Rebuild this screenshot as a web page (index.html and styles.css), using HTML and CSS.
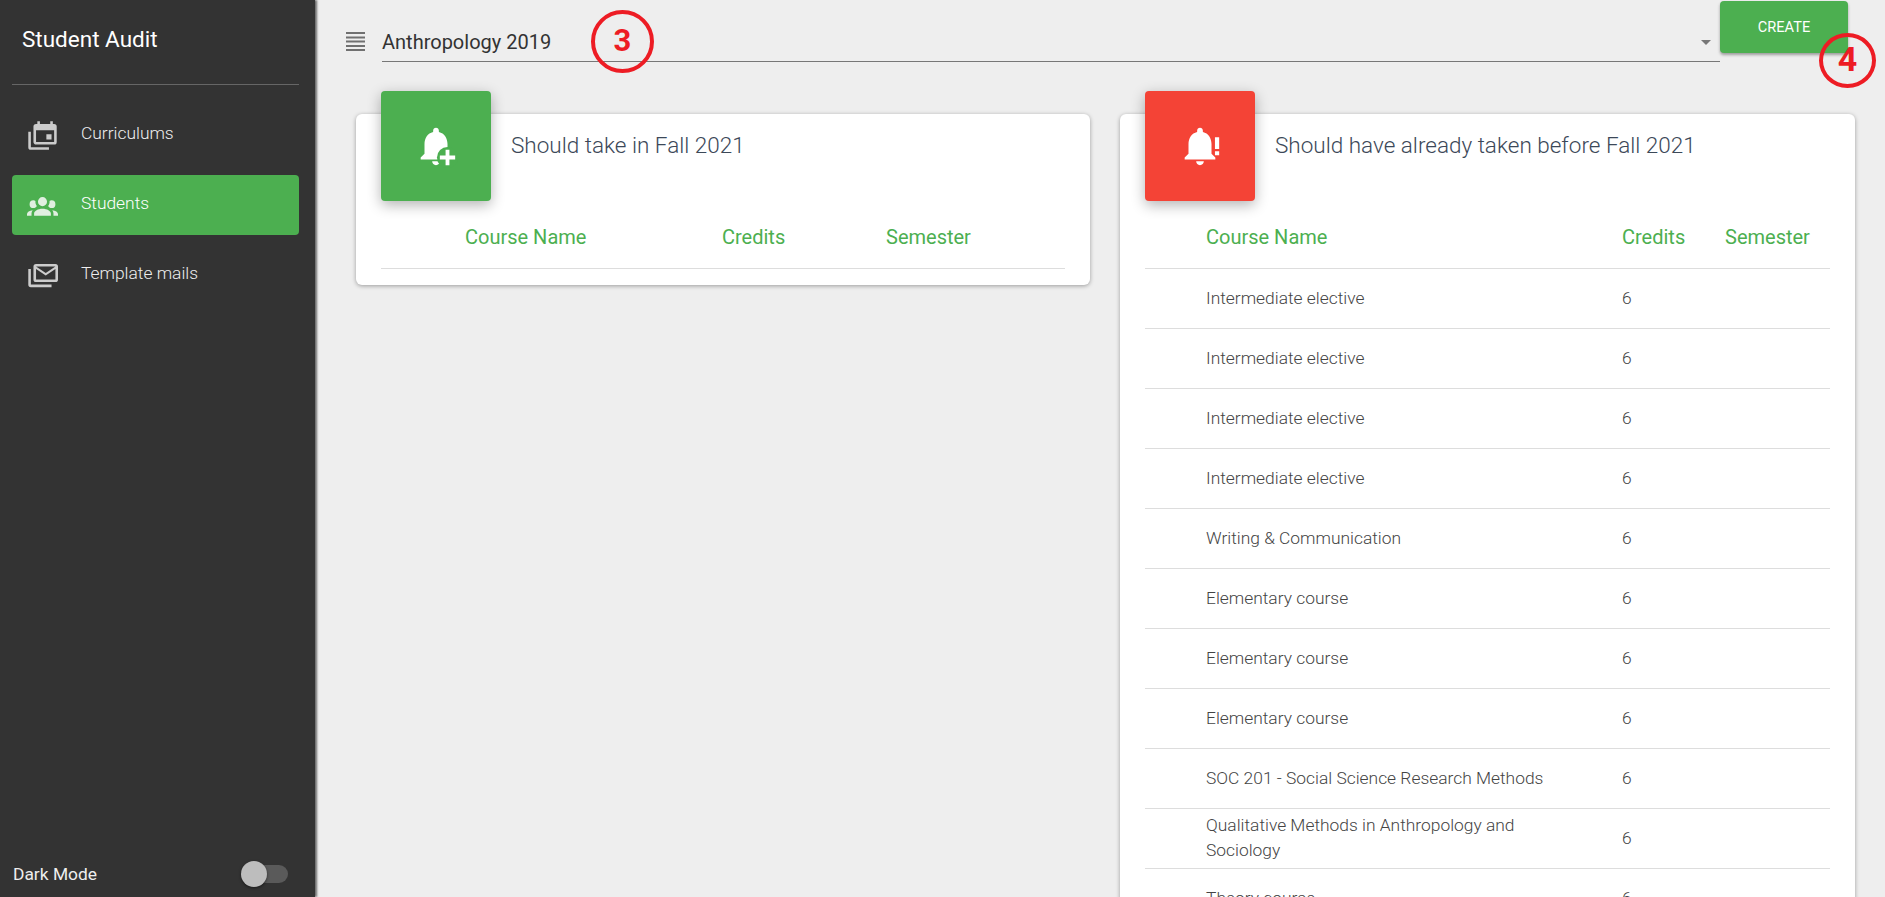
FILE: index.html
```html
<!DOCTYPE html>
<html lang="en">

<head>
	<meta charset="UTF-8" />
	<title>Student Audit</title>
	<link rel="stylesheet" href="styles.css">
</head>

<body>
	<!-- sidebar -->
	<div class="sidebar">
		<div class="brand">Student Audit</div>
		<div class="nav">
			<a class="nav-item">
				<svg class="nav-icon" viewBox="0 0 24 24"><path d="M21,17V8H7V17H21M21,3A2,2 0 0,1 23,5V17A2,2 0 0,1 21,19H7C5.89,19 5,18.1 5,17V5A2,2 0 0,1 7,3H8V1H10V3H18V1H20V3H21M3,21H17V23H3A2,2 0 0,1 1,21V9H3V21M19,15H15V11H19V15Z" /></svg>
				<span>Curriculums</span>
			</a>
			<a class="nav-item active">
				<svg class="nav-icon" viewBox="0 0 24 24"><path d="M12,5.5A3.5,3.5 0 0,1 15.5,9A3.5,3.5 0 0,1 12,12.5A3.5,3.5 0 0,1 8.5,9A3.5,3.5 0 0,1 12,5.5M5,8C5.56,8 6.08,8.15 6.53,8.42C6.38,9.85 6.8,11.27 7.66,12.38C7.16,13.34 6.16,14 5,14A3,3 0 0,1 2,11A3,3 0 0,1 5,8M19,8A3,3 0 0,1 22,11A3,3 0 0,1 19,14C17.84,14 16.84,13.34 16.34,12.38C17.2,11.27 17.62,9.85 17.47,8.42C17.92,8.15 18.44,8 19,8M5.5,18.25C5.5,16.18 8.41,14.5 12,14.5C15.59,14.5 18.5,16.18 18.5,18.25V20H5.5V18.25M0,20V18.5C0,17.11 1.89,15.94 4.45,15.6C3.86,16.28 3.5,17.22 3.5,18.25V20H0M24,20H20.5V18.25C20.5,17.22 20.14,16.28 19.55,15.6C22.11,15.94 24,17.11 24,18.5V20Z" /></svg>
				<span>Students</span>
			</a>
			<a class="nav-item">
				<svg class="nav-icon" viewBox="0 0 24 24"><path d="M22,3H7A2,2 0 0,0 5,5V15A2,2 0 0,0 7,17H22A2,2 0 0,0 24,15V5A2,2 0 0,0 22,3M22,15H7V7L14.5,12L22,7V15M14.5,10L7,5H22L14.5,10M3,19H19V21H3A2,2 0 0,1 1,19V7H3V19Z" /></svg>
				<span>Template mails</span>
			</a>
		</div>
		<div class="dark-mode">
			<span>Dark Mode</span>
			<div class="switch"><div class="switch-thumb"></div></div>
		</div>
	</div>

	<div class="main">
		<!-- curriculum select and create -->
		<div class="topbar">
			<svg class="list-icon" viewBox="0 0 19 19"><path d="M0,0H19V2H0ZM0,4.5H19V6.5H0ZM0,8.5H19V10.5H0ZM0,13H19V15H0ZM0,17H19V19H0Z" /></svg>
			<div class="select">
				<span>Anthropology 2019</span>
				<div class="select-arrow"></div>
			</div>
			<button class="button">CREATE</button>
		</div>

		<div class="cards">
			<div class="card">
				<div class="card-head">
					<div class="card-icon green">
						<svg viewBox="0 0 24 24"><path d="M12 22c1.1 0 2-.9 2-2h-4c0 1.1.9 2 2 2zm6-6v-5c0-3.07-1.63-5.64-4.5-6.32V4c0-.83-.67-1.5-1.5-1.5s-1.5.67-1.5 1.5v.68C7.64 5.36 6 7.92 6 11v5l-2 2v1h16v-1l-2-2z" /><circle class="icon-hole" cx="18" cy="18" r="5.5" /><path d="M17 14h2v3h3v2h-3v3h-2v-3h-3v-2h3z" /></svg>
					</div>
					<div class="card-title">Should take in Fall 2021</div>
				</div>
				<table class="courses courses-now">
					<colgroup>
						<col class="col-blank">
						<col class="col-name">
						<col class="col-credits">
						<col>
					</colgroup>
					<thead>
						<tr>
							<th></th>
							<th>Course Name</th>
							<th>Credits</th>
							<th>Semester</th>
						</tr>
					</thead>
				</table>
			</div>

			<div class="card">
				<div class="card-head">
					<div class="card-icon red">
						<svg viewBox="0 0 24 24"><path d="M12 22c1.1 0 2-.9 2-2h-4c0 1.1.9 2 2 2zm6-6v-5c0-3.07-1.63-5.64-4.5-6.32V4c0-.83-.67-1.5-1.5-1.5s-1.5.67-1.5 1.5v.68C7.64 5.36 6 7.92 6 11v5l-2 2v1h16v-1l-2-2z" /><path d="M19.8 7.4h2.2v6.2h-2.2zM19.8 14.8h2.2v2h-2.2z" /></svg>
					</div>
					<div class="card-title">Should have already taken before Fall 2021</div>
				</div>
				<table class="courses courses-late">
					<colgroup>
						<col class="col-blank">
						<col class="col-name">
						<col class="col-credits">
						<col>
					</colgroup>
					<thead>
						<tr>
							<th></th>
							<th>Course Name</th>
							<th>Credits</th>
							<th>Semester</th>
						</tr>
					</thead>
					<tbody>
						<tr><td></td><td>Intermediate elective</td><td>6</td><td></td></tr>
						<tr><td></td><td>Intermediate elective</td><td>6</td><td></td></tr>
						<tr><td></td><td>Intermediate elective</td><td>6</td><td></td></tr>
						<tr><td></td><td>Intermediate elective</td><td>6</td><td></td></tr>
						<tr><td></td><td>Writing &amp; Communication</td><td>6</td><td></td></tr>
						<tr><td></td><td>Elementary course</td><td>6</td><td></td></tr>
						<tr><td></td><td>Elementary course</td><td>6</td><td></td></tr>
						<tr><td></td><td>Elementary course</td><td>6</td><td></td></tr>
						<tr><td></td><td>SOC 201 - Social Science Research Methods</td><td>6</td><td></td></tr>
						<tr><td></td><td>Qualitative Methods in Anthropology and Sociology</td><td>6</td><td></td></tr>
						<tr><td></td><td>Theory course</td><td>6</td><td></td></tr>
					</tbody>
				</table>
			</div>
		</div>
	</div>

	<!-- red annotations drawn on top of the screenshot -->
	<div class="callout callout-3">3</div>
	<div class="callout callout-4">4</div>
</body>

</html>
```

FILE: styles.css
```css
* {
	box-sizing: border-box;
}

body {
	margin: 0;
	height: 100vh;
	overflow: hidden;
	display: flex;
	background-color: #eee;
	font-family: Roboto, Arial, sans-serif;
}

.sidebar {
	width: 315px;
	height: 100vh;
	flex-shrink: 0;
	display: flex;
	flex-direction: column;
	padding: 0 16px 0 12px;
	background-color: #333;
	color: #fff;
	box-shadow: 2px 0 2px rgba(0, 0, 0, 0.55);
}

.brand {
	height: 85px;
	padding: 26px 0 0 10px;
	line-height: 26px;
	font-size: 22.5px;
	border-bottom: 1px solid #666;
}

.nav {
	display: flex;
	flex-direction: column;
	gap: 10px;
	margin-top: 20px;
}

.nav-item {
	display: flex;
	align-items: center;
	height: 60px;
	padding-left: 15px;
	border-radius: 4px;
	font-size: 17.4px;
	font-weight: 300;
	color: #eee;
}

.nav-item span {
	margin-left: 23px;
	padding-bottom: 4px;
}

.nav-item.active {
	background-color: #4caf50;
	color: #fff;
}

.nav-icon {
	width: 31px;
	height: 31px;
	fill: #ccc;
}

.nav-item.active .nav-icon {
	fill: #e0efe0;
}

.dark-mode {
	display: flex;
	align-items: center;
	justify-content: space-between;
	margin-top: auto;
	margin-bottom: 10px;
	margin-left: 1px;
	height: 26px;
	font-size: 17.4px;
	color: #eee;
}

.switch {
	position: relative;
	width: 35px;
	height: 18px;
	margin-right: 11px;
	border-radius: 9px;
	background-color: #5a5a5a;
}

.switch-thumb {
	position: absolute;
	left: -12px;
	top: -4px;
	width: 26px;
	height: 26px;
	border-radius: 50%;
	background-color: #bdbdbd;
	box-shadow: 0 1px 3px rgba(0, 0, 0, 0.5);
}

.main {
	flex: 1;
	min-width: 0;
	margin-left: 3px;
}

.topbar {
	display: flex;
	align-items: flex-start;
	height: 114px;
	padding: 1px 37px 0 28px;
}

.list-icon {
	width: 19px;
	height: 19px;
	margin-top: 31px;
	margin-right: 17px;
	fill: #707070;
}

.select {
	flex: 1;
	display: flex;
	align-items: center;
	justify-content: space-between;
	height: 61px;
	padding: 22px 9px 0 0;
	border-bottom: 1px solid #777;
	font-size: 20px;
	color: #333;
}

.select-arrow {
	width: 0;
	height: 0;
	margin-top: 1px;
	border-left: 5px solid transparent;
	border-right: 5px solid transparent;
	border-top: 5px solid #777;
}

.button {
	width: 128px;
	height: 52px;
	border: none;
	border-radius: 4px;
	background-color: #4caf50;
	color: #fff;
	font-family: Roboto, Arial, sans-serif;
	font-size: 14.6px;
	box-shadow: 0 2px 3px rgba(0, 0, 0, 0.35);
}

.cards {
	display: grid;
	grid-template-columns: 734px 735px;
	gap: 30px;
	align-items: start;
	padding: 0 30px 0 38px;
}

.card {
	padding: 0 25px 16px;
	border-radius: 6px;
	background-color: #fff;
	box-shadow: 0 1px 4px rgba(0, 0, 0, 0.35);
}

.card-head {
	display: flex;
	align-items: flex-start;
	height: 94px;
}

.card-icon {
	display: flex;
	align-items: center;
	justify-content: center;
	width: 110px;
	height: 110px;
	flex-shrink: 0;
	margin-top: -23px;
	border-radius: 4px;
	box-shadow: 0 4px 14px rgba(0, 0, 0, 0.3);
}

.card-icon svg {
	width: 46px;
	height: 46px;
	fill: #fff;
}

.card-icon.green {
	background-color: #4caf50;
}

.card-icon.red {
	background-color: #f44336;
}

.icon-hole {
	fill: #4caf50;
}

.card-title {
	margin-left: 20px;
	padding-top: 16px;
	line-height: 30px;
	font-size: 22.5px;
	font-weight: 300;
	color: #3c4858;
}

.courses {
	width: 100%;
	table-layout: fixed;
	border-collapse: collapse;
}

.courses th {
	height: 60px;
	padding: 0 0 2px;
	text-align: left;
	font-size: 20px;
	font-weight: 400;
	color: #4caf50;
	border-bottom: 1px solid #ddd;
}

.courses td {
	height: 60px;
	padding: 0;
	line-height: 25px;
	font-size: 17.4px;
	font-weight: 300;
	color: #444;
	border-bottom: 1px solid #ddd;
}

.courses-now .col-blank {
	width: 84px;
}

.courses-now .col-name {
	width: 257px;
}

.courses-now .col-credits {
	width: 164px;
}

.courses-late .col-blank {
	width: 61px;
}

.courses-late .col-name {
	width: 416px;
}

.courses-late .col-credits {
	width: 103px;
}

.courses-late td:nth-child(2) {
	padding-right: 57px;
}

.callout {
	position: absolute;
	display: flex;
	align-items: center;
	justify-content: center;
	width: 63px;
	height: 63px;
	padding-bottom: 2px;
	border: 4px solid #ed1c24;
	border-radius: 50%;
	font-size: 31px;
	font-weight: 700;
	color: #ed1c24;
}

.callout-3 {
	left: 591px;
	top: 10px;
}

.callout-4 {
	left: 1819px;
	top: 33px;
	width: 57px;
	height: 55px;
	padding-bottom: 4px;
	font-size: 34px;
}
```
